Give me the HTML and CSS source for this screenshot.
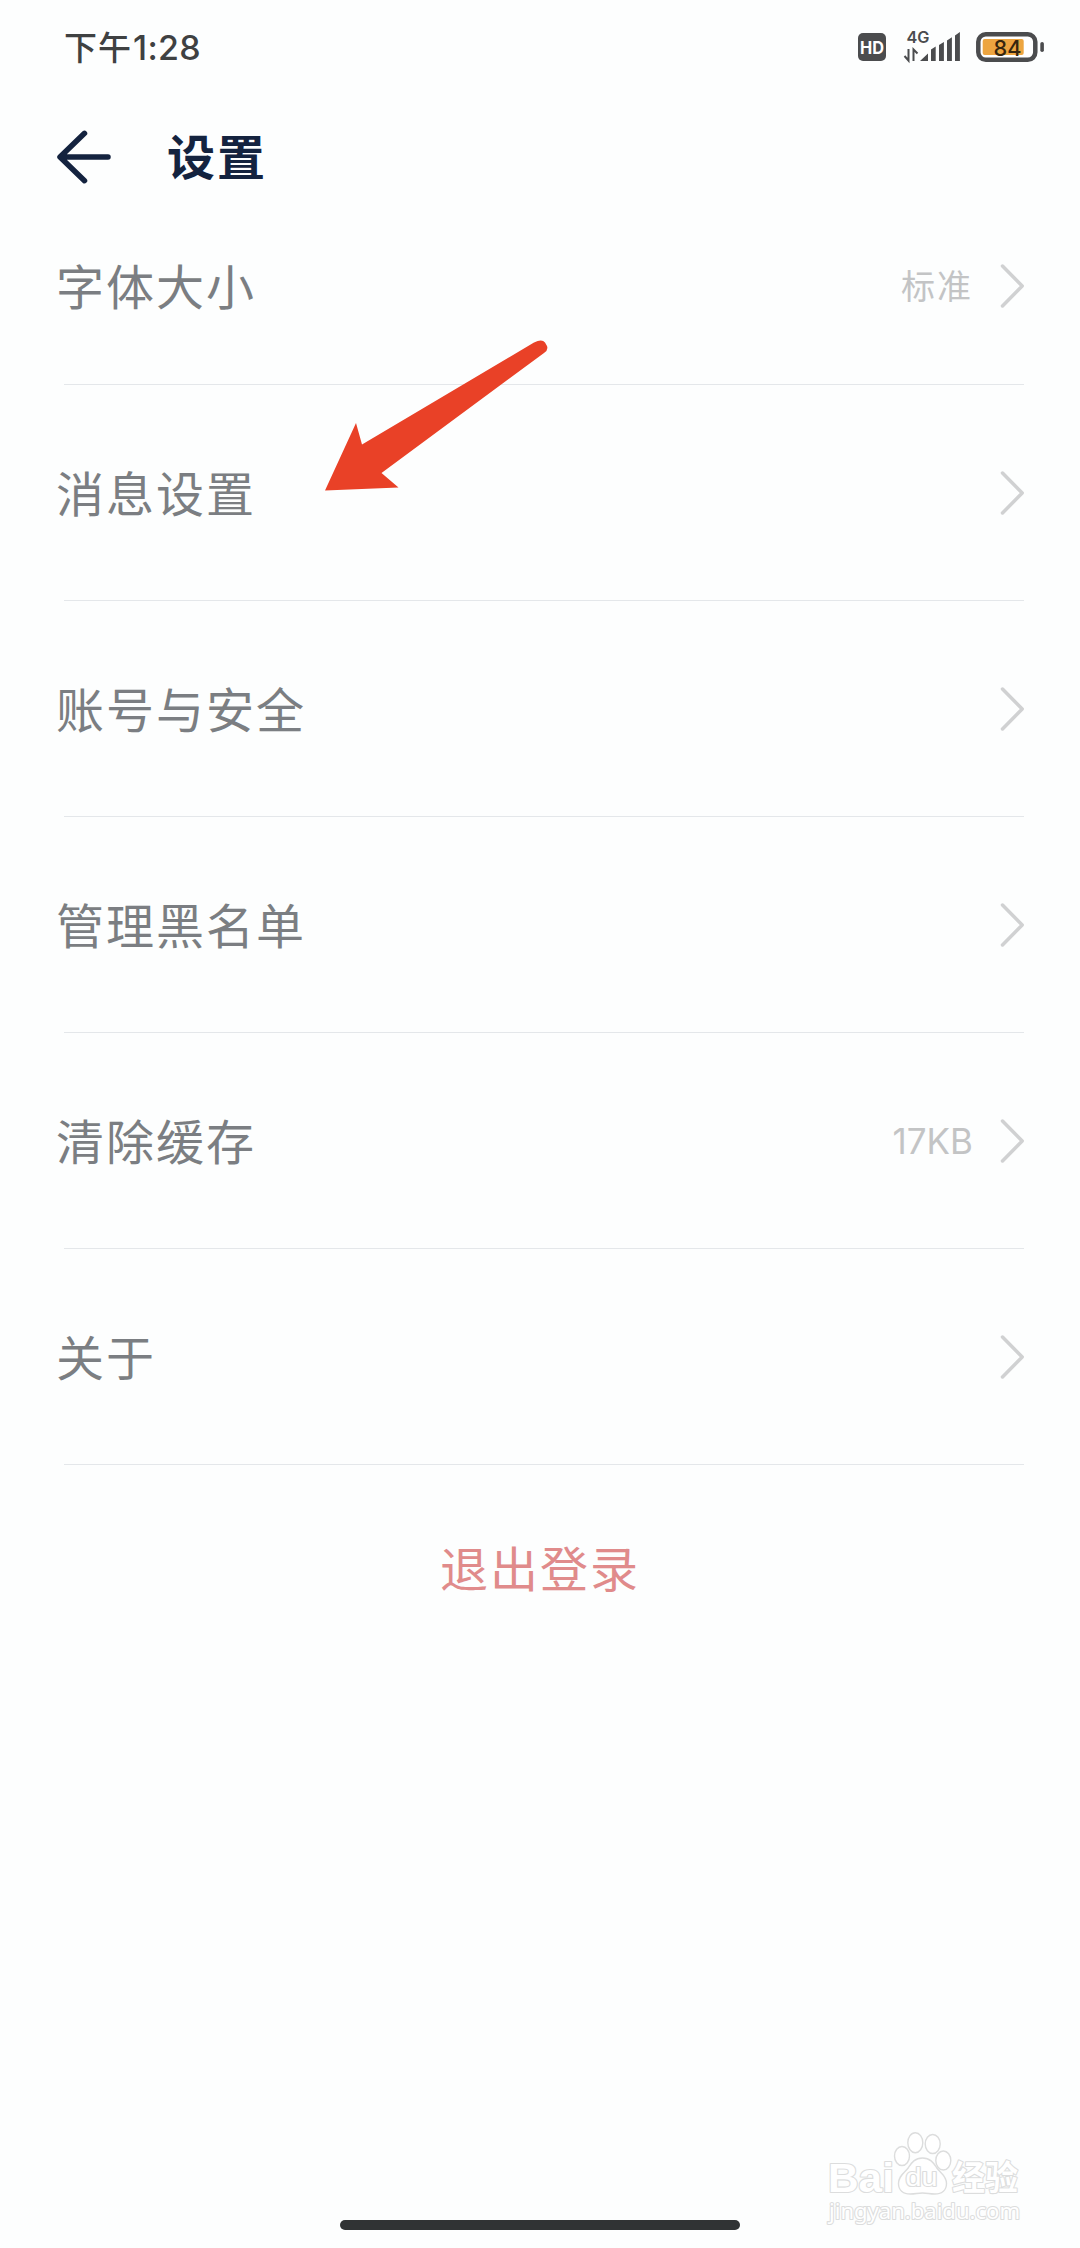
FILE: index.html
```html
<!DOCTYPE html>
<html lang="zh-CN">
<head>
<meta charset="utf-8">
<title>设置</title>
<link rel="stylesheet" href="styles.css">
</head>
<body>
<div class="screen">
  <header class="status">
    <div class="time">下午<span class="digits">1:28</span></div>
    <svg class="status-icons" width="192" height="40" viewBox="0 0 192 40">
      <rect class="ink" x="2" y="5" width="28" height="28" rx="5"/>
      <text class="hd" x="4" y="26" textLength="24" lengthAdjust="spacingAndGlyphs">HD</text>
      <text class="net" x="50.500" y="14.500" textLength="23" lengthAdjust="spacingAndGlyphs">4G</text>
      <path class="transfer" d="M52.500 21v11.500l-4-4.500M57.500 33V21.500l4 4"/>
      <path class="ink" d="M64 33l8-7.500V33zM75 21.500l4.700-3V33H75zM83 17l4.900-3V33H83zM91 12.500l4.900-3.200V33H91zM99 7.500l4.900-3.500V33H99z"/>
      <rect class="shell" x="122.300" y="6.300" width="57" height="25.500" rx="7.500"/>
      <rect class="charge" x="126.700" y="11" width="41" height="16" rx="2"/>
      <rect class="ink" x="184.300" y="14" width="3.600" height="10" rx="1.800"/>
      <text class="level" x="137.500" y="28" textLength="28" lengthAdjust="spacingAndGlyphs">84</text>
    </svg>
  </header>

  <div class="titlebar">
    <svg class="back" width="60" height="56" viewBox="0 0 60 56">
      <path d="M30.500 4.300L6 28l24.500 23.700M6.500 28H54"/>
    </svg>
    <h1 class="title">设置</h1>
  </div>

  <main class="list">
    <div class="row row-first"><span class="label">字体大小</span><span class="value">标准</span><svg class="chevron" width="28" height="46" viewBox="0 0 28 46"><path d="M6.500 3l19.700 20L6.500 43"/></svg></div>
    <div class="row"><span class="label">消息设置</span><svg class="chevron" width="28" height="46" viewBox="0 0 28 46"><path d="M6.500 3l19.700 20L6.500 43"/></svg></div>
    <div class="row"><span class="label">账号与安全</span><svg class="chevron" width="28" height="46" viewBox="0 0 28 46"><path d="M6.500 3l19.700 20L6.500 43"/></svg></div>
    <div class="row"><span class="label">管理黑名单</span><svg class="chevron" width="28" height="46" viewBox="0 0 28 46"><path d="M6.500 3l19.700 20L6.500 43"/></svg></div>
    <div class="row"><span class="label">清除缓存</span><span class="value value-size">17KB</span><svg class="chevron" width="28" height="46" viewBox="0 0 28 46"><path d="M6.500 3l19.700 20L6.500 43"/></svg></div>
    <div class="row"><span class="label">关于</span><svg class="chevron" width="28" height="46" viewBox="0 0 28 46"><path d="M6.500 3l19.700 20L6.500 43"/></svg></div>
  </main>

  <button class="logout">退出登录</button>

  <svg class="pointer" width="230" height="160" viewBox="0 0 230 160">
    <path d="M0 151.500L31 84l6 21.500L209 3.500q8-4 11 0l2 3.500q1.500 4-3 7L56.500 134 73.500 148.500z"/>
  </svg>

  <svg class="watermark" width="210" height="110" viewBox="0 0 210 110">
    <text class="brand" x="4" y="61.500" textLength="66" lengthAdjust="spacingAndGlyphs">Bai</text>
    <ellipse cx="78" cy="26" rx="7.500" ry="9.500"/>
    <ellipse cx="91.300" cy="12.700" rx="7.500" ry="10"/>
    <ellipse cx="108.700" cy="14" rx="7.500" ry="9.500"/>
    <ellipse cx="119.300" cy="30.500" rx="7.500" ry="9.500"/>
    <path d="M98.500 28c8 0 11 5 14 9.500 4 6 10 8 10 16 0 7-5 10.500-12 10.500-5 0-7-1-12-1s-7 1-12 1c-7 0-12-3.500-12-10.500 0-8 6-10.500 10-16 3-4.500 6-9.500 14-9.500z"/>
    <text class="du" x="81.500" y="56" textLength="32" lengthAdjust="spacingAndGlyphs">du</text>
    <text class="brand-cn" x="128" y="59.500" textLength="66" lengthAdjust="spacingAndGlyphs">经验</text>
    <text class="site" x="5" y="89" textLength="191" lengthAdjust="spacingAndGlyphs">jingyan.baidu.com</text>
  </svg>

  <div class="home-bar"></div>
</div>
</body>
</html>
```
FILE: styles.css
```css
* { box-sizing: border-box; }
body { margin: 0; background: #fdfefe; }
.screen {
  position: relative;
  display: flex;
  flex-direction: column;
  width: 1080px;
  height: 2248px;
  overflow: hidden;
  font-family: "Noto Sans CJK SC", sans-serif;
}
.status {
  display: flex;
  justify-content: space-between;
  align-items: center;
  height: 96px;
  padding: 0 32px 0 64px;
}
.time { padding-bottom: 2px; font-size: 33px; font-weight: 500; letter-spacing: 1px; line-height: 48px; color: #3f4142; }
.digits { font-family: Inter, sans-serif; font-size: 34px; font-weight: 500; letter-spacing: 0.3px; margin-left: 1px; }
.status-icons { overflow: visible; }
.ink { fill: #4b4c4e; }
.hd { font: 700 17px Inter, sans-serif; fill: #fff; }
.net { font: 600 15.5px Inter, sans-serif; fill: #4b4c4e; }
.transfer { fill: none; stroke: #4b4c4e; stroke-width: 2; }
.shell { fill: #fff; stroke: #4b4c4e; stroke-width: 4.500; }
.charge { fill: #eda540; }
.level { font: 500 22px Inter, sans-serif; fill: #35260f; }
.titlebar { display: flex; align-items: center; height: 92px; padding: 30px 54px 0; gap: 53px; }
.back { fill: none; stroke: #14233f; stroke-width: 5.500; stroke-linecap: round; stroke-linejoin: round; }
.title { margin: 0; padding-bottom: 5px; font-size: 48px; font-weight: 700; letter-spacing: 2px; line-height: 57px; color: #14233f; }
.list { display: flex; flex-direction: column; padding: 0 56px 0 64px; }
.row { display: flex; align-items: center; height: 216px; border-bottom: 1px solid #e4e7ea; }
.row-first { height: 197px; }
.label { flex: 1; margin-left: -8px; padding-bottom: 4px; font-size: 48px; letter-spacing: 2px; line-height: 60px; color: #7b7e82; }
.value { margin-right: 23px; padding-bottom: 3px; font-size: 34px; letter-spacing: 2px; color: #c3c4c5; }
.value-size { padding-bottom: 0; font-family: Inter, sans-serif; font-size: 35px; letter-spacing: 0; }
.chevron { overflow: visible; fill: none; stroke: #d0d1d2; stroke-width: 3.500; stroke-linecap: round; stroke-linejoin: round; }
.logout {
  align-self: center;
  margin-top: 71px;
  padding: 0;
  border: 0;
  background: none;
  font-family: inherit;
  font-size: 48px;
  letter-spacing: 2px;
  line-height: 60px;
  color: #e08b8b;
}
.pointer { position: absolute; left: 325px; top: 339px; fill: #e94127; }
.watermark { position: absolute; left: 824px; top: 2130px; overflow: visible; fill: #fff; stroke: #dcdddd; stroke-width: 1.400; }
.watermark text { paint-order: stroke; stroke-width: 2.200; stroke-linejoin: round; }
.brand { font: 700 41px "Liberation Sans", sans-serif; }
.du { font: 400 25px "Liberation Sans", sans-serif; }
.brand-cn { font: 700 34px "Noto Sans CJK SC", sans-serif; }
.site { font: 400 22.5px "Noto Sans", sans-serif; }
.home-bar { width: 400px; height: 10px; margin: auto auto 18px; border-radius: 5px; background: #303334; }
```
